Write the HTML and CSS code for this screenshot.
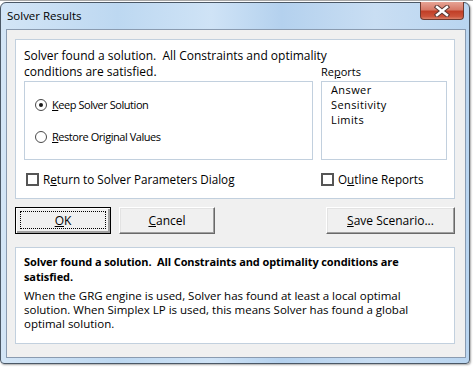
FILE: index.html
```html
<!DOCTYPE html>
<html>
<head>
    <title>Solver Results</title>
    <meta charset="utf-8" />
    <link rel="stylesheet" href="styles.css">
</head>
<body>

    <div class="window">

        <div class="titlebar">
            <span class="title">Solver Results</span>
            <div class="close">
                <svg width="16" height="12" viewBox="0 0 16 12">
                    <path d="M3 2 L13 10 M13 2 L3 10" stroke="#5a3a36" stroke-width="4.4" stroke-linecap="square" />
                    <path d="M3 2 L13 10 M13 2 L3 10" stroke="#ffffff" stroke-width="2.4" stroke-linecap="square" />
                </svg>
            </div>
        </div>

        <div class="client">

            <div class="group">
                <div class="col_left">
                    <p class="intro">Solver found a solution.&nbsp; All Constraints and optimality<br />conditions are satisfied.</p>
                    <div class="options">
                        <div class="option"><span class="radio checked"></span><span><u>K</u>eep Solver Solution</span></div>
                        <div class="option"><span class="radio"></span><span><u>R</u>estore Original Values</span></div>
                    </div>
                    <div class="check_row"><span class="checkbox"></span><span>R<u>e</u>turn to Solver Parameters Dialog</span></div>
                </div>
                <div class="col_right">
                    <div class="label">Re<u>p</u>orts</div>
                    <ul class="reports">
                        <li>Answer</li>
                        <li>Sensitivity</li>
                        <li>Limits</li>
                    </ul>
                    <div class="check_row flush"><span class="checkbox"></span><span>O<u>u</u>tline Reports</span></div>
                </div>
            </div>

            <div class="buttons">
                <div class="btn btn_default"><u>O</u>K</div>
                <div class="btn"><u>C</u>ancel</div>
                <div class="btn btn_save"><u>S</u>ave Scenario...</div>
            </div>

            <div class="message">
                <p class="msg_title">Solver found a solution.&nbsp; All Constraints and optimality conditions are<br />satisfied.</p>
                <p class="msg_body">When the GRG engine is used, Solver has found at least a local optimal<br />solution. When Simplex LP is used, this means Solver has found a global<br />optimal solution.</p>
            </div>

        </div>

    </div>

</body>
</html>
```

FILE: styles.css
```css
html, body {
    margin: 0;
    padding: 0;
    background: #ffffff;
}

body {
    font-family: "Open Sans", "Noto Sans", sans-serif;
    font-size: 11px;
    color: #000000;
    width: 473px;
    height: 370px;
    overflow: hidden;
    border-top: 1px solid #a8a8a8;
    box-sizing: border-box;
}

.window {
    margin-top: 1px;
    width: 470px;
    height: 362px;
    box-sizing: border-box;
    border: 1px solid #4b5866;
    border-radius: 6px 6px 4px 4px;
    background: linear-gradient(to right, #d3e5f6 0%, #bdd8f1 25%, #cfe3f6 45%, #b4d1ee 60%, #c9def3 80%, #b9d5f0 100%);
    box-shadow: 1px 1px 2px rgba(0, 0, 0, 0.35);
}

.titlebar {
    height: 26px;
    display: flex;
    align-items: flex-start;
}

.title {
    font-size: 11.5px;
    margin-left: 6px;
    margin-top: 5px;
    line-height: 16px;
}

.close {
    margin-left: auto;
    margin-right: 5px;
    margin-top: -1px;
    width: 44px;
    height: 18px;
    box-sizing: border-box;
    border: 1px solid #6e3a30;
    border-top: none;
    border-radius: 0 0 4px 4px;
    background: linear-gradient(to bottom, #e6a394 0%, #d77a68 45%, #c13f27 55%, #cc543b 85%, #da8068 100%);
    display: flex;
    align-items: center;
    justify-content: center;
}

.client {
    margin-left: 5px;
    width: 460px;
    height: 329px;
    box-sizing: border-box;
    border: 1px solid #8a9bb0;
    background: #f0f0f0;
    padding: 9px 0 0 8px;
}

.group {
    width: 440px;
    height: 160px;
    box-sizing: border-box;
    border: 1px solid #c2d0de;
    background: #ffffff;
    padding: 8px 0 0 8px;
    display: flex;
    gap: 8px;
}

.col_left {
    width: 289px;
}

.col_right {
    width: 126px;
    padding-top: 16px;
}

.intro {
    margin: 0;
    font-size: 12px;
    line-height: 16px;
    white-space: nowrap;
}

.label {
    line-height: 16px;
}

.options {
    margin-top: 1px;
    height: 79px;
    box-sizing: border-box;
    border: 1px solid #c2d0de;
    padding: 15px 0 0 10px;
    display: flex;
    flex-direction: column;
    gap: 16px;
}

.option {
    display: flex;
    align-items: center;
    gap: 5px;
    line-height: 16px;
    letter-spacing: -0.45px;
}

.radio {
    width: 12px;
    height: 12px;
    box-sizing: border-box;
    border: 1px solid #4a4a4a;
    border-radius: 50%;
    background: #ffffff;
    display: flex;
    align-items: center;
    justify-content: center;
}

.radio.checked::after {
    content: "";
    width: 4px;
    height: 4px;
    border-radius: 50%;
    background: #1a1a1a;
}

.reports {
    list-style: none;
    margin: 1px 0 0 0;
    padding: 0 0 0 9px;
    height: 79px;
    box-sizing: border-box;
    border: 1px solid #c2d0de;
    letter-spacing: 0.4px;
}

.reports li {
    line-height: 15px;
}

.check_row {
    margin-top: 11px;
    margin-left: 2px;
    display: flex;
    align-items: center;
    gap: 4px;
    font-size: 11.7px;
    line-height: 16px;
    white-space: nowrap;
}

.check_row.flush {
    margin-left: 0;
}

.checkbox {
    width: 13px;
    height: 13px;
    box-sizing: border-box;
    border: 2px solid #555555;
    background: #ffffff;
}

.buttons {
    margin-top: 8px;
    width: 440px;
    display: flex;
    gap: 8px;
}

.btn {
    position: relative;
    width: 96px;
    height: 27px;
    box-sizing: border-box;
    border: 1px solid;
    border-color: #ffffff #696969 #696969 #ffffff;
    box-shadow: inset -1px -1px 0 #a0a0a0, inset 1px 1px 0 #e3e3e3;
    background: #f0f0f0;
    display: flex;
    align-items: center;
    justify-content: center;
    font-size: 12px;
}

.btn_default {
    border: 1px solid #000000;
    box-shadow: inset 1px 1px 0 #ffffff, inset -2px -2px 0 #a0a0a0;
}

.btn_default::after {
    content: "";
    position: absolute;
    left: 4px;
    top: 3px;
    right: 4px;
    bottom: 4px;
    border: 1px dotted #000000;
}

.btn_save {
    margin-left: auto;
    width: 129px;
}

.message {
    margin-top: 13px;
    width: 440px;
    height: 97px;
    box-sizing: border-box;
    border: 1px solid #c2d0de;
    background: #ffffff;
    padding: 6px 0 0 8px;
    white-space: nowrap;
}

.msg_title {
    margin: 0;
    font-weight: bold;
    line-height: 15px;
    letter-spacing: -0.1px;
}

.msg_body {
    margin: 5px 0 0 0;
    font-size: 11.5px;
    line-height: 14px;
}
```
